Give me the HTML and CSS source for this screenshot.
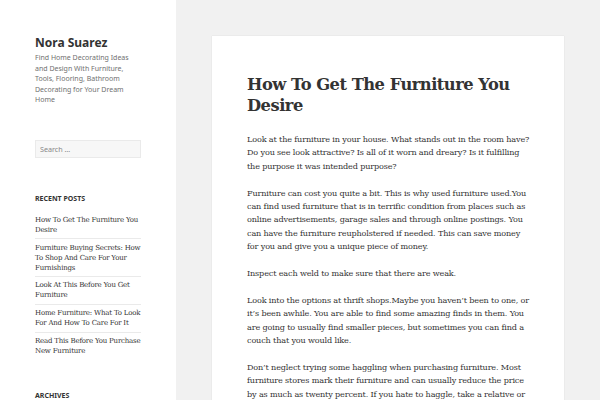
FILE: index.html
```html
<!DOCTYPE html>
<html>
<head>
    <title>How To Get The Furniture You Desire – Nora Suarez</title>
    <link rel="stylesheet" href="styles.css">
</head>
<body>
<div class="page">
    <aside class="sidebar">
        <div class="site-branding">
            <p class="site-title"><a href="#">Nora Suarez</a></p>
            <p class="site-description">Find Home Decorating Ideas and Design With Furniture, Tools, Flooring, Bathroom Decorating for Your Dream Home</p>
        </div>

        <form class="search-form">
            <input type="search" class="search-field" placeholder="Search …">
        </form>

        <!-- Recent posts widget -->
        <div class="widget">
            <h2 class="widget-title">Recent Posts</h2>
            <ul class="post-list">
                <li><a href="#">How To Get The Furniture You Desire</a></li>
                <li><a href="#">Furniture Buying Secrets: How To Shop And Care For Your Furnishings</a></li>
                <li><a href="#">Look At This Before You Get Furniture</a></li>
                <li><a href="#">Home Furniture: What To Look For And How To Care For It</a></li>
                <li><a href="#">Read This Before You Purchase New Furniture</a></li>
            </ul>
        </div>

        <div class="widget widget-archives">
            <h2 class="widget-title">Archives</h2>
        </div>
    </aside>

    <main class="site-main">
        <article class="post">
            <h1 class="entry-title">How To Get The Furniture You Desire</h1>
            <div class="entry-content">
                <p>Look at the furniture in your house. What stands out in the room have? Do you see look attractive? Is all of it worn and dreary? Is it fulfilling the purpose it was intended purpose?</p>
                <p>Furniture can cost you quite a bit. This is why used furniture used.You can find used furniture that is in terrific condition from places such as online advertisements, garage sales and through online postings. You can have the furniture reupholstered if needed. This can save money for you and give you a unique piece of money.</p>
                <p>Inspect each weld to make sure that there are weak.</p>
                <p>Look into the options at thrift shops.Maybe you haven’t been to one, or it’s been awhile. You are able to find some amazing finds in them. You are going to usually find smaller pieces, but sometimes you can find a couch that you would like.</p>
                <p>Don’t neglect trying some haggling when purchasing furniture. Most furniture stores mark their furniture and can usually reduce the price by as much as twenty percent. If you hate to haggle, take a relative or friend along who is good at it.</p>
            </div>
        </article>
    </main>
</div>
</body>
</html>
```

FILE: styles.css
```css
html, body {
    margin: 0;
    height: 100%;
    overflow: hidden;
}

body {
    background-color: #f1f1f1;
    color: #333;
    font-family: 'DejaVu Serif', serif;
}

.page {
    display: flex;
    min-height: 100%;
}

.sidebar {
    width: 176px;
    flex-shrink: 0;
    background-color: #fff;
    padding: 35px 35px 0 35px;
    box-sizing: border-box;
}

.site-title {
    margin: 0;
    font-family: 'Noto Sans', sans-serif;
    font-size: 12px;
    font-weight: bold;
    line-height: 16px;
}

.site-title a {
    color: #333;
    text-decoration: none;
}

.site-description {
    margin: 2px 0 0 0;
    font-family: 'Noto Sans', sans-serif;
    font-size: 7px;
    line-height: 10.5px;
    color: #707070;
}

.search-form {
    margin-top: 34px;
}

.search-field {
    display: block;
    width: 106px;
    height: 18px;
    box-sizing: border-box;
    margin: 0;
    padding: 0 4px;
    border: 1px solid #eaeaea;
    background-color: #f7f7f7;
    font-family: 'Noto Sans', sans-serif;
    font-size: 7.2px;
    color: #707070;
    outline: none;
}

.search-field::placeholder {
    color: #888;
}

.widget {
    margin-top: 36px;
}

.widget-archives {
    margin-top: 32px;
}

.widget-title {
    margin: 0;
    font-family: 'Noto Sans', sans-serif;
    font-size: 7px;
    font-weight: bold;
    line-height: 10px;
    text-transform: uppercase;
    color: #333;
}

.post-list {
    list-style: none;
    margin: 8px 0 0 0;
    padding: 0;
}

.post-list li {
    padding: 3.4px 0;
    border-bottom: 1px solid #eaeaea;
    font-size: 7px;
    letter-spacing: -0.2px;
    line-height: 10px;
}

.post-list li:last-child {
    border-bottom: none;
}

.post-list a {
    color: #333;
    text-decoration: none;
}

.site-main {
    flex: 1;
    padding: 36px 36px 0 36px;
}

.post {
    background-color: #fff;
    box-shadow: 0 0 1px rgba(0, 0, 0, 0.15);
    padding: 38px 32px 0 35px;
    min-height: 400px;
}

.entry-title {
    margin: 0 0 17px 0;
    font-size: 16.3px;
    letter-spacing: -0.5px;
    line-height: 21px;
    font-weight: bold;
    color: #333;
}

.entry-content p {
    margin: 0 0 13.4px 0;
    font-size: 8.1px;
    letter-spacing: -0.15px;
    line-height: 13.4px;
    color: #333;
}
```
